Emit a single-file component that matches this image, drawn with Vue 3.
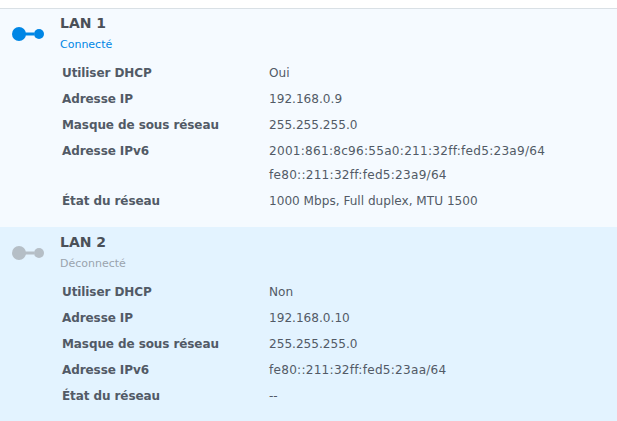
<template>
  <div class="page">
    <section
      v-for="lan in lans"
      :key="lan.name"
      :class="['lan', { off: !lan.connected }]"
    >
      <header class="lan-head">
        <svg class="lan-icon" width="32" height="14" viewBox="0 0 32 14">
          <rect x="12" y="5.5" width="10" height="3" />
          <circle cx="7" cy="7" r="7" />
          <circle cx="27" cy="7" r="5" />
        </svg>
        <div>
          <h2 class="lan-name">{{ lan.name }}</h2>
          <p class="lan-status">{{ lan.status }}</p>
        </div>
      </header>
      <dl class="info">
        <div v-for="row in lan.rows" :key="row.label" :class="['row', { ipv6: row.ipv6 }]">
          <dt>{{ row.label }}</dt>
          <dd>
            <span v-for="v in row.values" :key="v" class="val">{{ v }}</span>
          </dd>
        </div>
      </dl>
    </section>
  </div>
</template>

<script setup>
const lans = [
  {
    name: 'LAN 1',
    status: 'Connecté',
    connected: true,
    rows: [
      { label: 'Utiliser DHCP', values: ['Oui'] },
      { label: 'Adresse IP', values: ['192.168.0.9'] },
      { label: 'Masque de sous réseau', values: ['255.255.255.0'] },
      {
        label: 'Adresse IPv6',
        ipv6: true,
        values: ['2001:861:8c96:55a0:211:32ff:fed5:23a9/64', 'fe80::211:32ff:fed5:23a9/64']
      },
      { label: 'État du réseau', values: ['1000 Mbps, Full duplex, MTU 1500'] }
    ]
  },
  {
    name: 'LAN 2',
    status: 'Déconnecté',
    connected: false,
    rows: [
      { label: 'Utiliser DHCP', values: ['Non'] },
      { label: 'Adresse IP', values: ['192.168.0.10'] },
      { label: 'Masque de sous réseau', values: ['255.255.255.0'] },
      { label: 'Adresse IPv6', ipv6: true, values: ['fe80::211:32ff:fed5:23aa/64'] },
      { label: 'État du réseau', values: ['--'] }
    ]
  }
]
</script>

<style>
html, body {
  margin: 0;
  background: #fff;
}
</style>

<style scoped>
.page {
  padding-top: 8px;
  box-sizing: border-box;
  height: 421px;
  overflow: hidden;
  font-family: "DejaVu Sans", Verdana, sans-serif;
  font-size: 12.1px;
  color: #525a66;
}

.lan {
  background: #f5faff;
  border-top: 1px solid #d9e0e5;
  padding: 6px 0 13px;
}

.lan.off {
  background: #e3f3ff;
  border-top: 0;
  padding-top: 7px;
  height: 194px;
  box-sizing: border-box;
}

.lan-head {
  display: flex;
  gap: 16px;
  padding-left: 12px;
}

.lan-icon {
  margin-top: 12px;
  fill: #0086e5;
}

.off .lan-icon {
  fill: #b5bec6;
}

.lan-name {
  margin: 0;
  font-size: 14px;
  line-height: 17px;
  font-weight: 700;
  color: #4a5058;
}

.lan-status {
  margin: 6px 0 0;
  font-size: 11px;
  line-height: 14px;
  color: #0086e5;
}

.off .lan-status {
  color: #9aa3ad;
}

.info {
  margin: 8px 0 0;
  padding-left: 62px;
}

.row {
  display: flex;
  padding: 1px 0;
  line-height: 24px;
}

dt {
  width: 207px;
  font-size: 12px;
  font-weight: 700;
  letter-spacing: -0.09px;
}

dd {
  margin: 0;
}

.ipv6 dd {
  letter-spacing: 0.25px;
}

.val {
  display: block;
}
</style>
